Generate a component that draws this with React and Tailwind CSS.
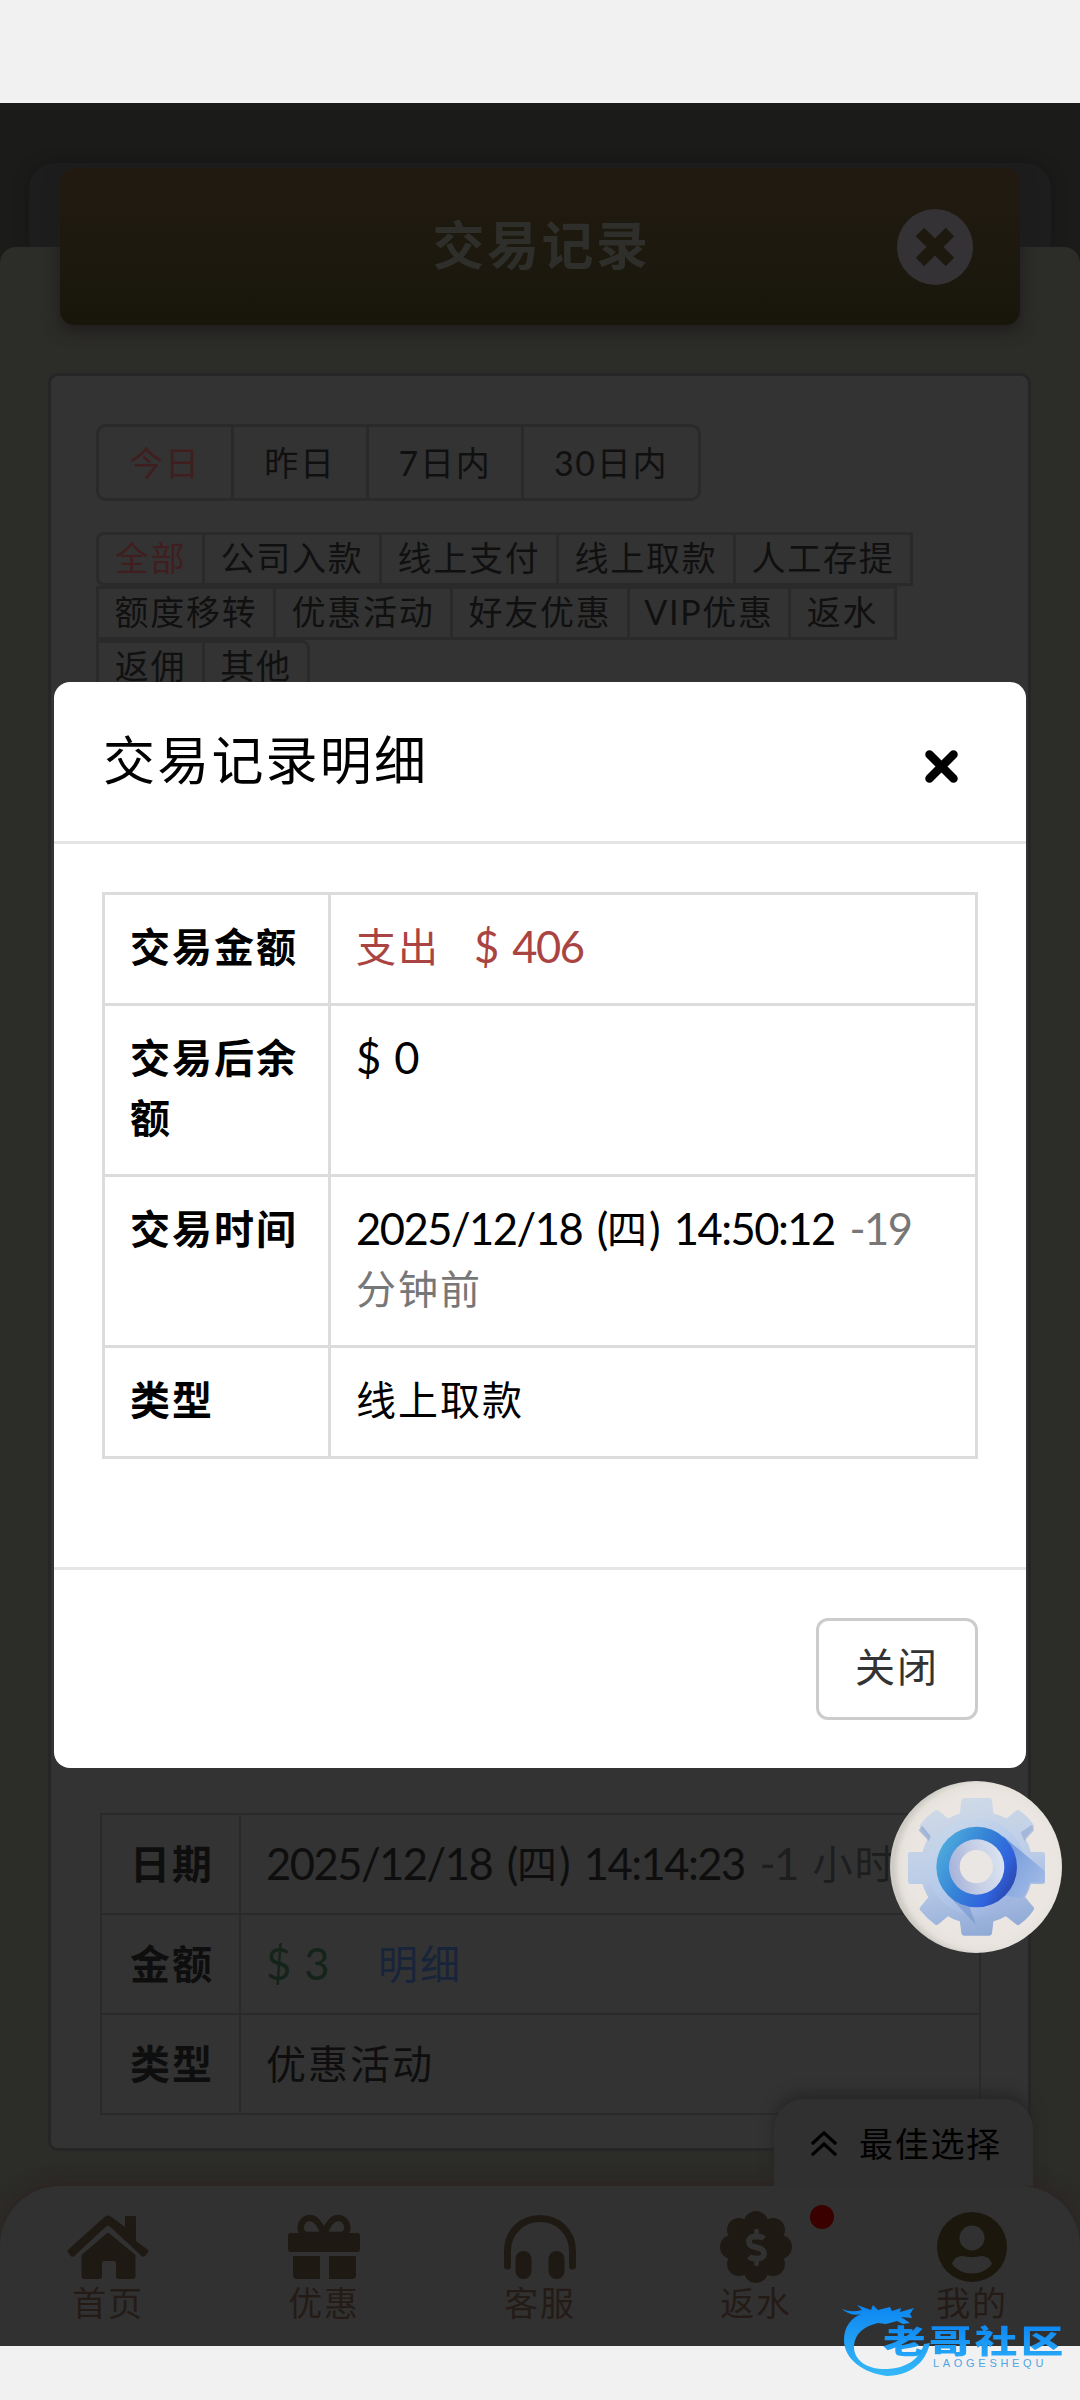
import { useId } from "react";
import { FaDollarSign } from "react-icons/fa";

const dateFilters = [
  { label: "今日", width: "w-[138px]", active: true },
  { label: "昨日", width: "w-[138px]" },
  { label: "7日内", width: "w-[158px]" },
  { label: "30日内", width: "w-[180px]" },
];

const typeFilters = [
  [
    { label: "全部", width: "w-[109px]", active: true },
    { label: "公司入款", width: "w-[180px]" },
    { label: "线上支付", width: "w-[180px]" },
    { label: "线上取款", width: "w-[180px]" },
    { label: "人工存提", width: "w-[180px]" },
  ],
  [
    { label: "额度移转", width: "w-[180px]" },
    { label: "优惠活动", width: "w-[180px]" },
    { label: "好友优惠", width: "w-[180px]" },
    { label: "VIP优惠", width: "w-[164px]" },
    { label: "返水", width: "w-[109px]" },
  ],
  [
    { label: "返佣", width: "w-[109px]" },
    { label: "其他", width: "w-[108px]" },
  ],
];

const Num = ({ children, className = "" }) => (
  <span
    className={`relative top-[1px] text-[43.500px] leading-none tracking-[-1.500px] [word-spacing:5px] ${className}`}
  >
    {children}
  </span>
);

const FilterItem = ({ item, className = "" }) => (
  <button
    type="button"
    className={`-ml-[3px] first:ml-0 shrink-0 border-[3px] border-[#2a2a2a] text-center tracking-[1.7px] ${item.width} ${
      item.active ? "text-[#401e1f]" : "text-[#101010]"
    } ${className}`}
  >
    {item.label}
  </button>
);

const HomeIcon = () => (
  <svg width="82" height="64" viewBox="0 0 82 64" fill="currentColor">
    <path d="M58 1h10q1 0 1 1v24l11.500 8.500q1.500 1.500.4 3l-3 3.500q-1.400 1.500-3 .2L43 11.500q-2-1.600-4 0L7 41.200q-1.600 1.300-3 0l-3-3.600q-1.200-1.500.4-3L37.500 2q3.500-3 7 0L58 12z" />
    <path d="M39.500 18.500q1.500-1.300 3 0L68.500 40v21q0 3-3 3H52q-3 0-3-3V48q0-2-2-2H37q-2 0-2 2v13q0 3-3 3H17.500q-3 0-3-3V40z" />
  </svg>
);

const GiftIcon = () => (
  <svg width="72" height="64" viewBox="0 0 72 64" fill="currentColor">
    <rect x="0" y="18" width="72" height="19" rx="3" />
    <path d="M5 41h27v23H9q-4 0-4-4zM41 41h27v19q0 4-4 4H41z" />
    <path
      d="M35 20H20c-11 0-9-17 2-17 7 0 11 8 14 16 3-8 7-16 14-16 11 0 13 17 2 17z"
      fill="none"
      stroke="currentColor"
      strokeWidth="6.500"
    />
  </svg>
);

const HeadphoneIcon = () => (
  <svg width="72" height="64" viewBox="0 0 72 64" fill="currentColor">
    <path
      d="M3.500 51V36C3.500 17 18 3.500 36 3.500S68.500 17 68.500 36v15"
      fill="none"
      stroke="currentColor"
      strokeWidth="7"
      strokeLinecap="round"
    />
    <rect x="11.500" y="36" width="16" height="28" rx="8" />
    <rect x="44.500" y="36" width="16" height="28" rx="8" />
  </svg>
);

const RebateIcon = () => (
  <span className="relative flex h-[72px] w-[72px] items-center justify-center">
    <svg
      className="absolute inset-0"
      width="72"
      height="72"
      viewBox="-36 -36 72 72"
      fill="currentColor"
    >
      <circle r="28" />
      {[0, 45, 90, 135, 180, 225, 270, 315].map((deg) => (
        <circle key={deg} cy="-24" r="12" transform={`rotate(${deg})`} />
      ))}
    </svg>
    <FaDollarSign className="relative text-[37px] text-[#313131]" />
  </span>
);

const UserIcon = () => (
  <svg width="70" height="70" viewBox="0 0 70 70">
    <circle cx="35" cy="35" r="35" fill="#1b170d" />
    <circle cx="35" cy="26" r="12.500" fill="#313131" />
    <path
      d="M15 52c2-6 6-8 11-8 5 1.500 13 1.500 18 0 5 0 9 2 11 8-5 6.500-12 9.500-20 9.500S20 58.500 15 52z"
      fill="#313131"
    />
  </svg>
);

const navItems = [
  { label: "首页", icon: HomeIcon },
  { label: "优惠", icon: GiftIcon },
  { label: "客服", icon: HeadphoneIcon },
  { label: "返水", icon: RebateIcon, dot: true },
  { label: "我的", icon: UserIcon },
];

const BottomNav = () => (
  <nav className="relative mt-[35px] grid h-[160px] grid-cols-5 rounded-t-[60px] bg-[#313131] shadow-[0_-4px_16px_#2c2422]">
    {navItems.map(({ label, icon: Icon, dot }) => (
      <a
        key={label}
        className="relative flex flex-col items-center pt-[25px] text-[#1f1914]"
      >
        <span className="flex h-[72px] items-center">
          <Icon />
        </span>
        <span className="-mt-px text-[34px] leading-[42px] tracking-[1.7px] text-[#241b17]">
          {label}
        </span>
        {dot && (
          <span className="absolute left-[162px] top-[19px] h-6 w-6 rounded-full bg-[#3a0000]" />
        )}
      </a>
    ))}
    <div className="absolute -top-[87px] right-[47px] flex h-[87px] w-[259px] items-center rounded-t-[30px] bg-[#303030] pl-[36px] pt-[3px] text-black shadow-[0_-6px_14px_#262626] [clip-path:inset(-30px_-30px_0_-30px)]">
      <svg
        width="28"
        height="28"
        viewBox="0 0 30 30"
        fill="none"
        stroke="currentColor"
        strokeWidth="3.400"
      >
        <path d="M2 15 15 3l13 12M2 27l13-12 13 12" />
      </svg>
      <span className="ml-[21px] text-[34px] leading-[50px] tracking-[1.7px]">
        最佳选择
      </span>
    </div>
  </nav>
);

const recordTh =
  "h-[100px] w-[139px] border-[2px] border-[#2a2a2a] pl-[28px] text-left font-bold tracking-[2px]";
const recordTd =
  "border-[2px] border-[#2a2a2a] pl-[25px] whitespace-nowrap tracking-[2px]";

const RecordTable = () => (
  <table className="ml-[49px] w-[881px] table-fixed border-collapse text-[40px] leading-[60px] text-[#0e0e0e]">
    <tbody>
      <tr>
        <th className={recordTh}>日期</th>
        <td className={recordTd}>
          <Num>2025/12/18 (</Num>四<Num>) 14:14:23 </Num>
          <span className="text-[#1e1e1e]">
            <Num>-1 </Num>小时
          </span>
        </td>
      </tr>
      <tr>
        <th className={recordTh}>金额</th>
        <td className={recordTd}>
          <Num className="text-[#14241a]">$ 3</Num>
          <a className="ml-[50px] text-[#18243a]">明细</a>
        </td>
      </tr>
      <tr>
        <th className={recordTh}>类型</th>
        <td className={recordTd}>优惠活动</td>
      </tr>
    </tbody>
  </table>
);

const RecordCard = () => (
  <div className="ml-[48px] mr-[49px] mt-[48px] flex h-[1778px] flex-col rounded-[10px] border-[3px] border-[#262626] bg-[#333333]">
    <div className="ml-[45px] mt-[48px] flex text-[34px] leading-[71px]">
      {dateFilters.map((item) => (
        <FilterItem
          key={item.label}
          item={item}
          className="h-[77px] first:rounded-l-[10px] last:rounded-r-[10px]"
        />
      ))}
    </div>
    <div className="ml-[45px] mt-[31px] text-[34px] leading-[46px]">
      {typeFilters.map((row, i) => (
        <div key={i} className="flex">
          {row.map((item) => (
            <FilterItem
              key={item.label}
              item={item}
              className={`h-[54px] pb-[2px] ${item.label === "全部" ? "rounded-l-[8px]" : ""} ${
                item.label === "其他" ? "rounded-r-[8px]" : ""
              }`}
            />
          ))}
        </div>
      ))}
    </div>
    <div className="mt-auto mb-[33px]">
      <RecordTable />
    </div>
  </div>
);

const th =
  "w-[226px] border-[3px] border-[#dcdcdc] pt-[22px] pb-[26px] pl-[25px] pr-[12px] text-left align-top font-bold tracking-[2px]";
const td =
  "border-[3px] border-[#dcdcdc] pt-[22px] pb-[26px] pl-[25px] pr-[24px] align-top tracking-[2px]";

const DetailModal = () => (
  <div className="absolute left-[54px] top-[682px] flex h-[1086px] w-[972px] flex-col rounded-[16px] bg-white text-black">
    <div className="flex h-[162px] items-center justify-between border-b-[3px] border-[#e5e5e5] pl-[49px] pr-[67px]">
      <h4 className="mb-[3px] text-[52px] leading-[60px] tracking-[2.2px]">
        交易记录明细
      </h4>
      <svg
        className="mt-[9px]"
        width="35"
        height="35"
        viewBox="0 0 35 35"
        stroke="currentColor"
        strokeWidth="8.500"
        strokeLinecap="round"
      >
        <path d="m5.500 5.500 24 24M29.500 5.500l-24 24" />
      </svg>
    </div>
    <div className="flex-1 px-[48px] pt-[48px]">
      <table className="w-[876px] table-fixed border-collapse text-[40px] leading-[60px]">
        <tbody>
          <tr>
            <th className={th}>交易金额</th>
            <td className={`${td} text-[#a94442]`}>
              支出
              <Num className="ml-[34px]">$ 406</Num>
            </td>
          </tr>
          <tr>
            <th className={th}>交易后余额</th>
            <td className={td}>
              <Num>$ 0</Num>
            </td>
          </tr>
          <tr>
            <th className={th}>交易时间</th>
            <td className={td}>
              <Num>2025/12/18 (</Num>四<Num>) 14:50:12 </Num>
              <span className="text-[#777777]">
                <Num>-19</Num>
                <br />
                分钟前
              </span>
            </td>
          </tr>
          <tr>
            <th className={th}>类型</th>
            <td className={td}>线上取款</td>
          </tr>
        </tbody>
      </table>
    </div>
    <div className="flex h-[201px] justify-end border-t-[3px] border-[#e5e5e5] pr-[48px] pt-[48px]">
      <button
        type="button"
        className="h-[102px] w-[162px] rounded-[12px] border-[3px] border-[#cccccc] pb-[4px] text-[40px] tracking-[2px] text-[#333333]"
      >
        关闭
      </button>
    </div>
  </div>
);

const SettingsBall = () => {
  const id = useId();
  return (
    <svg
      className="absolute left-[890px] top-[1781px]"
      width="172"
      height="172"
      viewBox="0 0 516 516"
    >
      <defs>
        <radialGradient id={`${id}ball`} cx="0.54" cy="0.5" r="0.52">
          <stop offset="0.8" stopColor="#ebe6e2" />
          <stop offset="0.93" stopColor="#e6e2db" />
          <stop offset="1" stopColor="#cfccc6" />
        </radialGradient>
        <linearGradient
          id={`${id}gear`}
          gradientUnits="userSpaceOnUse"
          x1="200"
          y1="50"
          x2="300"
          y2="466"
        >
          <stop offset="0" stopColor="#d0dae6" />
          <stop offset="0.5" stopColor="#bccde8" />
          <stop offset="1" stopColor="#8fa9d6" />
        </linearGradient>
        <linearGradient id={`${id}face`} x1="0" y1="0" x2="0.6" y2="1">
          <stop offset="0" stopColor="#cddbea" />
          <stop offset="0.6" stopColor="#b5caea" />
          <stop offset="1" stopColor="#9fb5e0" />
        </linearGradient>
        <linearGradient id={`${id}ring`} x1="0" y1="0.3" x2="0.9" y2="0.8">
          <stop offset="0" stopColor="#4eabdd" />
          <stop offset="0.45" stopColor="#3582d6" />
          <stop offset="0.8" stopColor="#3063de" />
          <stop offset="1" stopColor="#2b4bb4" />
        </linearGradient>
        <linearGradient id={`${id}core`} x1="0" y1="0.6" x2="1" y2="0.4">
          <stop offset="0" stopColor="#a5b2da" />
          <stop offset="0.5" stopColor="#c6cfe6" />
          <stop offset="1" stopColor="#dae4f1" />
        </linearGradient>
        <linearGradient id={`${id}cast`} x1="0" y1="0" x2="1" y2="1">
          <stop offset="0" stopColor="#6a93d8" />
          <stop offset="1" stopColor="#a9c0e8" />
        </linearGradient>
      </defs>
      <circle cx="258" cy="258" r="258" fill={`url(#${id}ball)`} />
      <path
        fill={`url(#${id}gear)`}
        stroke={`url(#${id}gear)`}
        strokeWidth="16"
        strokeLinejoin="round"
        d="M222 59h76l5 45q25 5 48 18l33-27q22 15 40 40l-28 35q14 24 21 51h40v80h-40q-7 26-21 48l28 34q-16 25-40 41l-36-28q-20 13-45 19l-5 41h-76l-5-41q-24-6-44-19l-33 28q-24-17-43-41l28-34q-16-24-21-48H62v-80h42q5-27 21-51l-28-35q18-24 43-40l33 27q21-13 44-18z"
      />
      <path d="M86 148 97 134 122 166 116 180z" fill="#8ea6d3" opacity="0.7" />
      <path d="m392 154 34-22 6 16-29 32z" fill="#8ea6d3" opacity="0.6" />
      <circle cx="260" cy="258" r="146" fill={`url(#${id}face)`} />
      <path
        d="M340 166 464 270v34h-44q-6 22-24 49L330 340z"
        fill={`url(#${id}cast)`}
      />
      <path d="m180 348 78 84-20-56 60-20z" fill="#7594cf" opacity="0.6" />
      <circle cx="260" cy="258" r="121" fill={`url(#${id}ring)`} />
      <circle cx="260" cy="258" r="83" fill={`url(#${id}core)`} />
      <circle cx="259" cy="257" r="50" fill="#eae6e3" />
    </svg>
  );
};

const Watermark = () => (
  <div className="absolute left-[842px] top-[2304px] h-[72px] w-[224px]">
    <svg
      className="absolute inset-0"
      width="96"
      height="72"
      viewBox="0 0 96 72"
    >
      <defs>
        <linearGradient id="swirl" x1="0" y1="0" x2="0" y2="1">
          <stop offset="0" stopColor="#0c86f2" />
          <stop offset="1" stopColor="#35b8f8" />
        </linearGradient>
      </defs>
      <path
        fill="url(#swirl)"
        d="M0 5q9 4 20 1l-5-5 14 5 2-5 5 5 12-3 2 4 9-3-1 4 14-4-4 6 2 4-11-1 9 6-7 1-6-3-11 3-8-1q-22 5-24 22c-1 16 14 25 34 24 18-1 31-9 36-25l6-1c-5 21-20 32-43 33C21 69 2 55 2 36 2 23 9 14 19 10 11 12 5 9 0 5z"
      />
    </svg>
    <div className="absolute left-[41px] top-[20px] origin-left scale-x-[1.33] bg-gradient-to-b from-[#0d86f3] to-[#27a8f8] bg-clip-text text-[32px] font-black leading-[34px] tracking-[2.500px] text-transparent">
      老哥社区
    </div>
    <div className="absolute left-[91px] top-[53px] font-['Liberation_Sans',sans-serif] text-[11px] leading-[12px] tracking-[3.700px] text-[#4fa5e6]">
      LAOGESHEQU
    </div>
  </div>
);

const App = () => {
  return (
    <div className="relative flex h-[2400px] w-[1080px] flex-col overflow-hidden bg-[#f1f1f1] font-['Lato','Noto_Sans_CJK_SC',sans-serif]">
      <div className="h-[103px] shrink-0" />

      <main className="flex h-[2243px] shrink-0 flex-col overflow-hidden bg-[#1b1b1a] pt-[60px]">
        <div className="mx-[29px] h-[84px] shrink-0 rounded-t-[26px] bg-[#1d1d1e] shadow-[0_0_14px_#161616]" />
        <div className="relative flex-1 rounded-t-[16px] bg-[#2c2c28]">
          <header className="relative mx-[60px] -mt-[79px] flex h-[157px] items-center justify-center rounded-[14px] bg-gradient-to-b from-[#221a11] via-[#1d190e] to-[#18160b] shadow-[0_6px_16px_#1f1d1d]">
            <h1 className="pb-[4px] pl-[3px] text-[52px] font-bold tracking-[2.500px] text-[#2e2e2a]">
              交易记录
            </h1>
            <svg
              className="absolute right-[47px] top-[41px]"
              width="76"
              height="76"
              viewBox="0 0 76 76"
            >
              <circle cx="38" cy="38" r="38" fill="#343234" />
              <path
                d="m23 23 30 30M53 23 23 53"
                stroke="#1d190e"
                strokeWidth="12"
              />
            </svg>
          </header>
          <RecordCard />
          <BottomNav />
        </div>
      </main>

      <DetailModal />
      <SettingsBall />
      <Watermark />
    </div>
  );
};

export default App;
